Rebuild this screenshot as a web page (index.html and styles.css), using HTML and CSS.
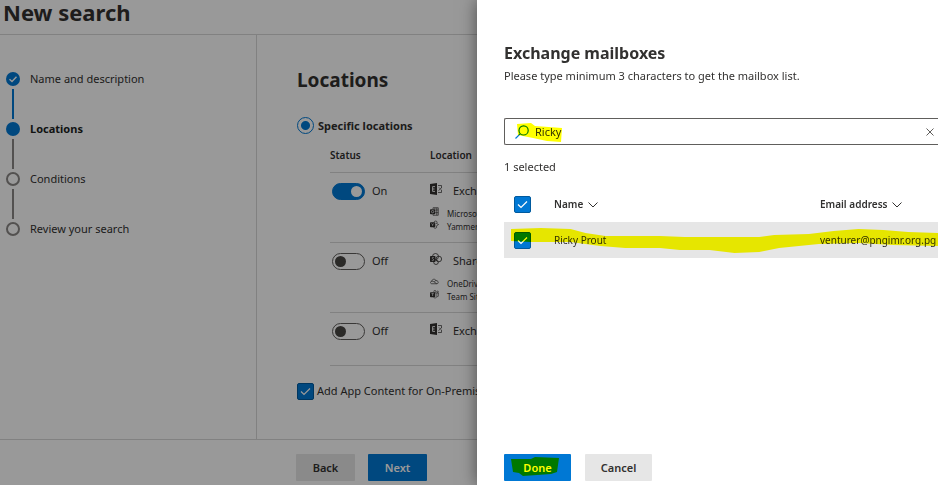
FILE: index.html
```html
<!DOCTYPE html>
<html lang="en">
<head>
  <meta charset="UTF-8">
  <meta name="viewport" content="width=device-width, initial-scale=1.0">
  <title>New search</title>
  <link rel="stylesheet" href="styles.css">
</head>
<body>

<!-- Shared icons -->
<svg class="sprite" aria-hidden="true">
  <symbol id="icon-chevron" viewBox="0 0 10 6">
    <path d="M0.5 0.5L5 5L9.5 0.5" fill="none" stroke="currentColor"/>
  </symbol>
  <symbol id="icon-exchange" viewBox="0 0 12 12">
    <path d="M0 1L7 0V12L0 11Z" fill="currentColor"/>
    <path d="M5 3.6H2.6V8.4H5M2.6 6H4.6" fill="none" stroke="#fff" stroke-width="0.9"/>
    <path d="M8 2.5H11.5V5L8.5 7.5M8 9.5H11.5V7M9 4.5L11 6.5" fill="none" stroke="currentColor" stroke-width="0.7"/>
  </symbol>
  <symbol id="icon-outlook" viewBox="0 0 12 12">
    <path d="M4 3V1H11V11H4V9.5M6.5 1V3M9 1V11M7 4H11M7 7.5H11" fill="none" stroke="currentColor" stroke-width="0.9"/>
    <rect y="3" width="7" height="6.5" rx="1" fill="currentColor"/>
    <circle cx="3.5" cy="6.2" r="1.6" fill="none" stroke="#fff" stroke-width="0.9"/>
  </symbol>
  <symbol id="icon-yammer" viewBox="0 0 12 12">
    <path d="M5 3C6 0.8 9.5 0.8 9.5 3.2L8 5M8.5 4.5L11.4 6L8.5 8M8 7.5C9.5 9 9 11 7 11C5.5 11 5 10 5 9.5" fill="none" stroke="currentColor" stroke-width="0.9"/>
    <rect y="3" width="7" height="6.5" rx="1" fill="currentColor"/>
    <path d="M2 4.5L3.5 6.5L5 4.5M3.5 6.5V8" fill="none" stroke="#fff" stroke-width="0.8"/>
  </symbol>
  <symbol id="icon-sharepoint" viewBox="0 0 12 12">
    <circle cx="5.5" cy="3.5" r="3" fill="none" stroke="currentColor" stroke-width="0.8"/>
    <circle cx="8.8" cy="6" r="2.8" fill="none" stroke="currentColor" stroke-width="0.8"/>
    <circle cx="6" cy="9.2" r="2.3" fill="none" stroke="currentColor" stroke-width="0.8"/>
    <rect y="3" width="5.5" height="6" rx="0.8" fill="currentColor"/>
    <path d="M3.8 4.6C2.4 3.8 1.4 5.2 2.8 5.9C4.4 6.6 3.4 8.2 1.8 7.4" fill="none" stroke="#fff" stroke-width="0.7"/>
  </symbol>
  <symbol id="icon-onedrive" viewBox="0 0 12 12">
    <path d="M2.5 9C0 9 0 5.8 2.3 5.8C2.5 2.5 7 2 8 4.8C11 4.2 12.4 9 9 9ZM2.3 5.8C4 5.2 5 6.2 9 9M8 4.8C6.5 5 6 5.8 5.5 6.5" fill="none" stroke="currentColor" stroke-width="0.9"/>
  </symbol>
  <symbol id="icon-teams" viewBox="0 0 12 12">
    <circle cx="6.5" cy="1.9" r="1.4" fill="none" stroke="currentColor" stroke-width="0.8"/>
    <circle cx="10.2" cy="2.4" r="1" fill="none" stroke="currentColor" stroke-width="0.8"/>
    <path d="M7 4H9.2V8.5C9.2 10.5 6 11.5 4.5 9.5M9.2 4H11.5V7.5C11.5 8.5 10.5 9 9.2 8.7" fill="none" stroke="currentColor" stroke-width="0.8"/>
    <rect y="3" width="7" height="6.5" rx="1" fill="currentColor"/>
    <path d="M2 4.8H5M3.5 4.8V8" stroke="#fff" stroke-width="0.9"/>
  </symbol>
</svg>

<div class="page">
  <header class="page-header">
    <h1>New search</h1>
  </header>

  <div class="wizard">
    <nav class="wizard-nav">
      <ol class="steps">
        <li class="step done">
          <span class="step-dot"><svg viewBox="0 0 14 14"><path d="M3.5 7.2L6 9.5L10.5 4.8" fill="none" stroke="#fff" stroke-width="1.4"/></svg></span>
          Name and description
        </li>
        <li class="step current"><span class="step-dot"></span>Locations</li>
        <li class="step"><span class="step-dot"></span>Conditions</li>
        <li class="step"><span class="step-dot"></span>Review your search</li>
      </ol>
    </nav>

    <main class="wizard-main">
      <div class="wizard-content">
        <h2>Locations</h2>

        <label class="radio-row">
          <input type="radio" name="scope" checked>
          Specific locations
        </label>

        <table class="locations">
          <thead>
            <tr><th>Status</th><th>Location</th></tr>
          </thead>
          <tbody>
            <tr class="tall">
              <td><label class="toggle"><input type="checkbox" checked>On</label></td>
              <td>
                <div class="location"><svg><use href="#icon-exchange"/></svg>Exchange mailboxes</div>
                <div class="sub-location"><svg><use href="#icon-outlook"/></svg>Microsoft 365 Groups</div>
                <div class="sub-location"><svg><use href="#icon-yammer"/></svg>Yammer messages</div>
              </td>
            </tr>
            <tr class="tall">
              <td><label class="toggle"><input type="checkbox">Off</label></td>
              <td>
                <div class="location"><svg><use href="#icon-sharepoint"/></svg>SharePoint sites</div>
                <div class="sub-location"><svg><use href="#icon-onedrive"/></svg>OneDrive sites</div>
                <div class="sub-location"><svg><use href="#icon-teams"/></svg>Team Sites</div>
              </td>
            </tr>
            <tr class="short">
              <td><label class="toggle"><input type="checkbox">Off</label></td>
              <td>
                <div class="location"><svg><use href="#icon-exchange"/></svg>Exchange public folders</div>
              </td>
            </tr>
          </tbody>
        </table>

        <label class="check-row">
          <input type="checkbox" class="checkbox" checked>
          Add App Content for On-Premises users
        </label>
      </div>
    </main>
  </div>

  <footer class="wizard-footer">
    <button type="button" class="btn">Back</button>
    <button type="button" class="btn primary">Next</button>
  </footer>
</div>

<div class="overlay"></div>

<aside class="panel">
  <div class="panel-body">
    <h2>Exchange mailboxes</h2>
    <p class="hint">Please type minimum 3 characters to get the mailbox list.</p>

    <div class="search-box">
      <svg class="search-icon" viewBox="0 0 14 14"><circle cx="8.6" cy="5.4" r="4.6" fill="none" stroke="currentColor" stroke-width="1.2"/><path d="M5.4 8.6L0.5 13.5" stroke="currentColor" stroke-width="1.2"/></svg>
      <input type="text" value="Ricky" aria-label="Search mailboxes">
      <button type="button" class="clear-btn" aria-label="Clear"><svg viewBox="0 0 8 8"><path d="M0.5 0.5L7.5 7.5M7.5 0.5L0.5 7.5" stroke="currentColor"/></svg></button>
      <svg class="marker marker-search" viewBox="0 0 48 20" preserveAspectRatio="none"><path d="M2 1L16 0L20 3L47 5L46 19L32 18L18 15L3 12Z"/></svg>
    </div>

    <p class="count">1 selected</p>

    <table class="mailboxes">
      <thead>
        <tr>
          <th><input type="checkbox" class="checkbox" aria-label="Select all" checked></th>
          <th>Name <svg><use href="#icon-chevron"/></svg></th>
          <th>Email address <svg><use href="#icon-chevron"/></svg></th>
        </tr>
      </thead>
      <tbody>
        <tr>
          <td><input type="checkbox" class="checkbox" aria-label="Select Ricky Prout" checked></td>
          <td>Ricky Prout</td>
          <td>venturer@pngimr.org.pg
            <svg class="marker marker-row" viewBox="0 0 430 26" preserveAspectRatio="none"><path d="M0 1L30 0L60 1L75 5L95 8L150 8L175 9L250 9L265 7L300 6L325 3L350 1L375 2L400 4L430 5V18L385 17L350 15L310 16L270 20L250 24L225 25L200 22L170 22L150 20L115 20L90 18L60 14L20 14L0 13Z"/></svg>
          </td>
        </tr>
      </tbody>
    </table>
  </div>

  <div class="panel-footer">
    <button type="button" class="btn primary">Done
      <svg class="marker marker-done" viewBox="0 0 48 20" preserveAspectRatio="none"><path d="M0 2L20 2L24 0L48 1L46 15L40 17L12 19L8 16L2 15Z"/></svg>
    </button>
    <button type="button" class="btn">Cancel</button>
  </div>
</aside>

</body>
</html>
```

FILE: styles.css
```css
* {
  box-sizing: border-box;
}

body {
  margin: 0;
  font-family: "Noto Sans", "Open Sans", sans-serif;
  font-size: 11px;
  line-height: 16px;
  color: #323130;
  background: #fff;
}

h1,
h2,
p {
  margin: 0;
}

button,
input {
  font: inherit;
  color: inherit;
}

.sprite {
  display: none;
}

.page {
  display: flex;
  flex-direction: column;
  height: 100vh;
}

.page-header {
  height: 35px;
  padding-left: 3px;
  border-bottom: 1px solid #d8d8d8;
}

.page-header h1 {
  font-size: 22px;
  line-height: 24px;
}

.wizard {
  display: flex;
  flex: 1;
  min-height: 0;
}

.wizard-nav {
  flex: 0 0 257px;
  padding: 36px 6px;
  border-right: 1px solid #d8d8d8;
}

/* Steps */
.steps {
  margin: 0;
  padding: 0;
  list-style: none;
}

.step {
  position: relative;
  display: flex;
  gap: 10px;
  height: 50px;
}

.step-dot {
  width: 14px;
  height: 14px;
  margin-top: 1px;
  border: 2px solid #8a8886;
  border-radius: 50%;
}

.step-dot svg {
  display: block;
}

.step:not(:last-child)::after {
  content: "";
  position: absolute;
  top: 18px;
  left: 6px;
  width: 2px;
  height: 30px;
  background: #8a8886;
}

.done .step-dot,
.current .step-dot {
  border: none;
  background: #0078d4;
}

.step.done::after {
  background: #0078d4;
}

.current {
  font-weight: 700;
  color: #201f1e;
}

.wizard-main {
  flex: 1;
  min-width: 0;
  overflow: hidden;
}

.wizard-content {
  padding: 32px 40px 0;
}

.wizard-content h2 {
  font-size: 19px;
  line-height: 26px;
}

.radio-row,
.check-row,
.toggle {
  display: flex;
  align-items: center;
}

.radio-row {
  gap: 4px;
  margin-top: 24px;
  font-weight: 700;
}

.radio-row input {
  appearance: none;
  width: 17px;
  height: 17px;
  margin: 0;
  border: 1px solid #0078d4;
  border-radius: 50%;
  background: radial-gradient(circle, #0078d4 4px, transparent 5px);
}

.locations {
  width: 600px;
  margin: 6px 0 0 33px;
  table-layout: fixed;
  border-collapse: collapse;
}

.locations th {
  height: 32px;
  padding: 0 0 2px;
  font-size: 10px;
  font-weight: 600;
  text-align: left;
}

.locations th:first-child {
  width: 100px;
}

.locations tr {
  border-bottom: 1px solid #d8d8d8;
}

.locations td {
  padding: 10px 0 0;
  vertical-align: top;
}

.tall {
  height: 70px;
}

.short {
  height: 53px;
}

.toggle {
  gap: 7px;
  padding-left: 2px;
}

.toggle input {
  appearance: none;
  display: flex;
  align-items: center;
  width: 33px;
  height: 17px;
  margin: 0;
  padding: 0 2px;
  border: 1px solid #605e5c;
  border-radius: 9px;
}

.toggle input::before {
  content: "";
  width: 11px;
  height: 11px;
  border-radius: 50%;
  background: #484644;
}

.toggle input:checked {
  justify-content: flex-end;
  border-color: #0078d4;
  background: #0078d4;
}

.toggle input:checked::before {
  background: #fff;
}

.location,
.sub-location {
  display: flex;
  white-space: nowrap;
}

.location {
  gap: 11px;
  margin-bottom: 8px;
}

.location svg {
  width: 12px;
  height: 12px;
}

.sub-location {
  gap: 8px;
  font-size: 8px;
  line-height: 13px;
}

.sub-location svg {
  width: 9px;
  height: 9px;
}

.checkbox {
  appearance: none;
  display: block;
  flex: none;
  width: 17px;
  height: 17px;
  margin: 0;
  border: 1px solid #005a9e;
  border-radius: 2px;
}

.checkbox:checked {
  background: #0078d4 url("data:image/svg+xml,%3Csvg xmlns='http://www.w3.org/2000/svg' viewBox='0 0 15 15'%3E%3Cpath d='M3 7.5L6 10.5L12 4.5' fill='none' stroke='%23fff' stroke-width='1.2'/%3E%3C/svg%3E");
}

.check-row {
  gap: 3px;
  margin-top: 17px;
  white-space: nowrap;
}

.wizard-footer {
  display: flex;
  gap: 13px;
  height: 46px;
  padding: 14px 0 0 296px;
  border-top: 1px solid #d8d8d8;
}

.btn {
  position: relative;
  width: 59px;
  height: 27px;
  padding: 0;
  border: none;
  border-radius: 1px;
  font-weight: 600;
  background: #e6e6e6;
}

.btn.primary {
  color: #fff;
  background: #0078d4;
}

.overlay {
  position: fixed;
  inset: 0;
  background: rgba(0, 0, 0, 0.4);
}

/* Flyout panel */
.panel {
  position: fixed;
  top: 0;
  right: 0;
  bottom: 0;
  display: flex;
  flex-direction: column;
  justify-content: space-between;
  width: 463px;
  padding: 42px 2px 4px 27px;
  background: #fff;
  box-shadow: 0 0 16px rgba(0, 0, 0, 0.5);
}

.panel h2 {
  font-size: 16px;
  line-height: 22px;
}

.hint {
  margin-top: 4px;
}

.search-box {
  position: relative;
  display: flex;
  align-items: center;
  height: 27px;
  margin-top: 34px;
  padding: 0 4px 0 10px;
  border: 1px solid #605e5c;
  border-right: none;
  border-radius: 2px 0 0 2px;
}

.search-icon {
  width: 14px;
  height: 14px;
  color: #0078d4;
}

.search-box input {
  flex: 1;
  min-width: 0;
  padding: 0 6px;
  border: none;
  outline: none;
  background: none;
}

.clear-btn {
  padding: 0;
  border: none;
  color: #605e5c;
  background: none;
}

.clear-btn svg {
  display: block;
  width: 8px;
  height: 8px;
}

.count {
  margin-top: 14px;
}

.mailboxes {
  width: 100%;
  margin-top: 11px;
  table-layout: fixed;
  border-collapse: collapse;
  font-size: 10px;
}

.mailboxes th,
.mailboxes td {
  height: 36px;
  padding: 0;
  text-align: left;
  white-space: nowrap;
}

.mailboxes th {
  font-weight: 600;
}

.mailboxes th svg {
  width: 10px;
  height: 6px;
  margin-left: 2px;
}

.mailboxes th:first-child {
  width: 50px;
}

.mailboxes th:last-child {
  width: 118px;
}

.mailboxes .checkbox {
  margin-left: 10px;
}

.mailboxes tbody tr {
  position: relative;
  background: #e6e6e6;
}

.panel-footer {
  display: flex;
  gap: 14px;
}

.panel-footer .btn {
  width: 67px;
}

/* Highlighter strokes */
.marker {
  position: absolute;
  fill: #ff0;
  mix-blend-mode: multiply;
  pointer-events: none;
}

.marker-search {
  top: 4px;
  left: 10px;
  width: 48px;
  height: 20px;
}

.marker-row {
  top: 6px;
  right: 0;
  width: 427px;
  height: 26px;
}

.marker-done {
  top: 3px;
  left: 7px;
  width: 48px;
  height: 20px;
}
```
